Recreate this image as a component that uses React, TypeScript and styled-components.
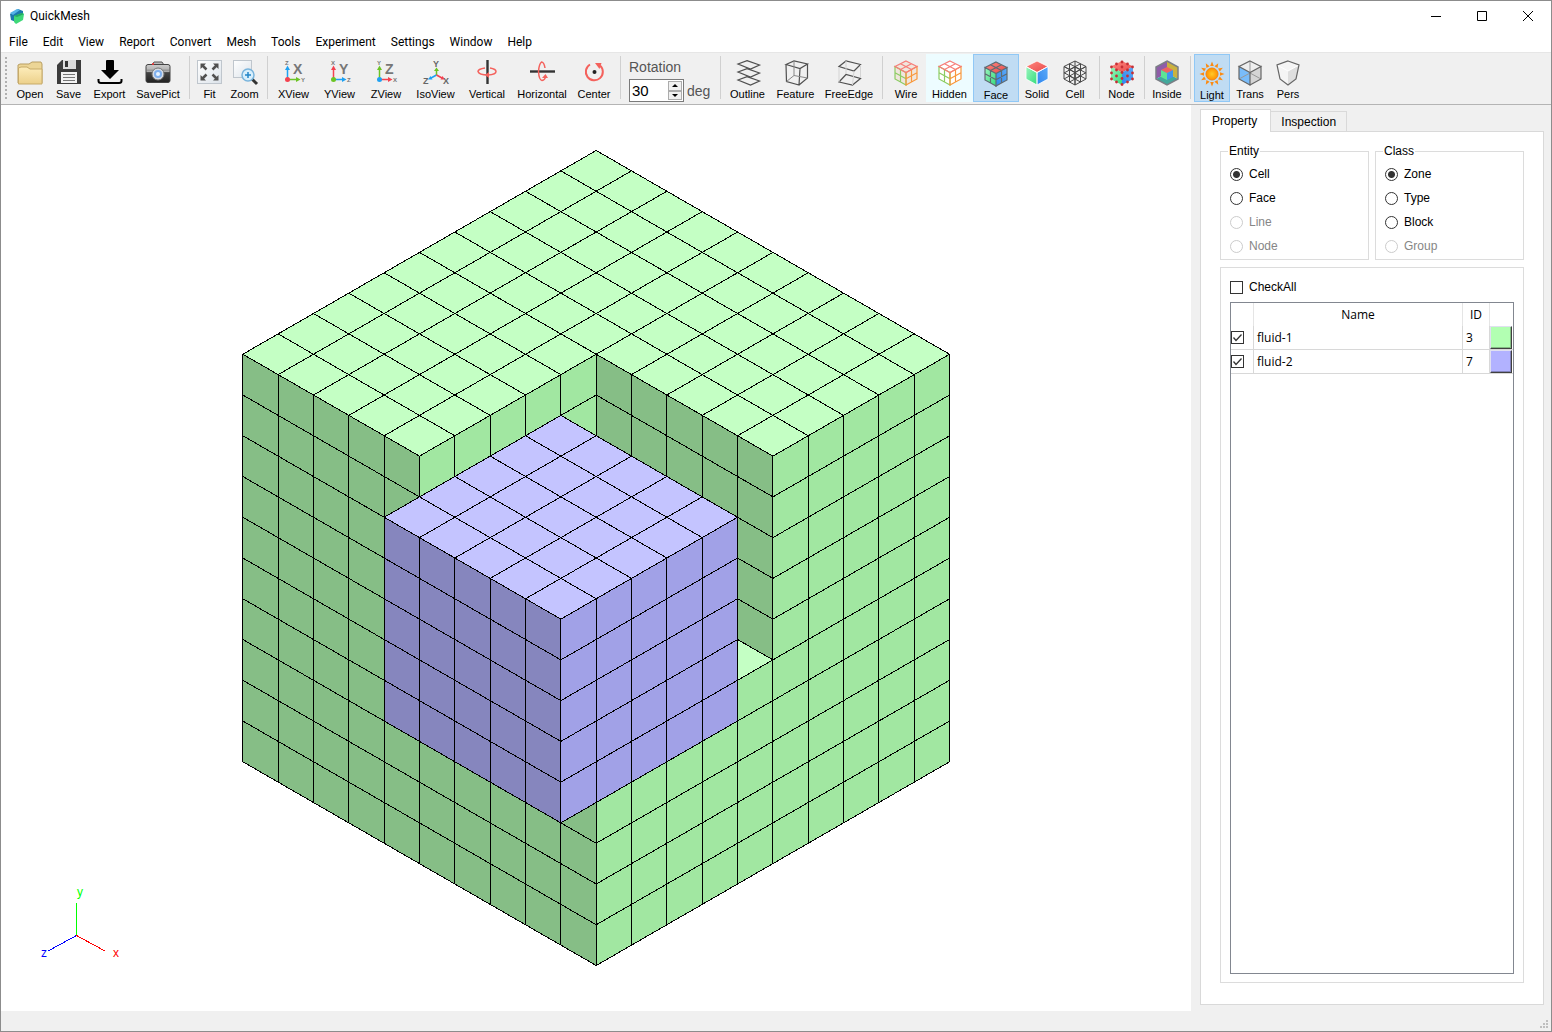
import React, { useState } from "react";
import styled, { createGlobalStyle, css } from "styled-components";

const ui = `"Liberation Sans", Arial, sans-serif`;
const system = `"Segoe UI", "Open Sans", "Noto Sans", sans-serif`;
const chrome = `"Segoe UI", Roboto, sans-serif`;

const GlobalStyle = createGlobalStyle`
  *, *::before, *::after { box-sizing: border-box; }
  body { margin: 0; background: #fff; color: #000; font: 12px/16px ${ui}; }
  button, input { font: inherit; color: inherit; margin: 0; }
`;

const Window = styled.div`
  display: flex;
  flex-direction: column;
  height: 100vh;
  min-height: 480px;
  border: 1px solid #8c8c8c;
  background: #fff;
  overflow: hidden;
`;

const TitleBar = styled.header`
  display: flex;
  align-items: center;
  height: 30px;
  flex: none;
  padding-left: 8px;
`;

const Title = styled.h1`
  flex: 1;
  margin: 0;
  padding-left: 5px;
  font: 400 12px/16px ${chrome};
`;

const CaptionButton = styled.button`
  display: grid;
  place-items: center;
  width: 46px;
  height: 28px;
  padding: 0;
  border: 0;
  background: none;
`;

const MenuBar = styled.nav`
  display: flex;
  align-items: center;
  flex: none;
  height: 21px;
`;

const MenuItem = styled.button`
  padding: 0 7px 0 8px;
  border: 0;
  background: none;
  font: 12px/20px ${chrome};
`;

const ToolBar = styled.div`
  display: flex;
  align-items: center;
  flex: none;
  height: 53px;
  padding-bottom: 2px;
  background: #f0f0f0;
  border-top: 1px solid #e6e6e6;
  border-bottom: 1px solid #b4b4b4;
`;

const Handle = styled.div`
  width: 10px;
  height: 44px;
  flex: none;
  background: radial-gradient(circle at 5px 2px, #b0b0b0 1px, transparent 1px) 0 0 / 10px 4px;
`;

const Separator = styled.div`
  flex: none;
  width: 1px;
  height: 43px;
  margin: 0 3px 0 4px;
  background: #d0d0d0;
`;

const Tool = styled.button<{ $width: number; $state?: "on" | "hover" }>`
  display: flex;
  flex-direction: column;
  align-items: center;
  flex: none;
  width: ${(p) => p.$width}px;
  height: 48px;
  padding: 5px 0 0;
  border: 1px solid transparent;
  background: none;
  font-size: 11px;
  line-height: 16px;
  white-space: nowrap;
  ${(p) => p.$state === "hover" && css`background: #edfcff;`}
  ${(p) =>
    p.$state === "on" &&
    css`
      padding-top: 6px;
      border-color: #90c8f6;
      background: #c0dcf3;
    `}
`;

const ToolIcon = styled.svg`
  flex: none;
  overflow: visible;
`;

const Rotation = styled.div`
  display: flex;
  flex-direction: column;
  flex: none;
  width: 92px;
  padding: 4px 0 0 5px;
  gap: 2px;
  color: #555;
  font-size: 14px;
  line-height: 20px;
`;

const RotationRow = styled.div`
  display: flex;
  align-items: center;
  gap: 3px;
`;

const SpinBox = styled.div`
  display: flex;
  width: 55px;
  height: 23px;
  border: 1px solid #7a7a7a;
  background: #fff;
`;

const SpinInput = styled.input`
  flex: 1;
  min-width: 0;
  padding: 0 2px;
  border: 0;
  background: none;
  color: #000;
  font-size: 15px;
  outline: none;
`;

const SpinButtons = styled.div`
  display: flex;
  flex-direction: column;
  width: 15px;
  padding: 1px 1px 1px 0;
`;

const SpinButton = styled.button`
  display: grid;
  place-items: center;
  flex: 1;
  padding: 0;
  border: 1px solid #acacac;
  background: #f0f0f0;
`;

const Work = styled.main`
  display: flex;
  flex: 1;
  min-height: 0;
  background: #f0f0f0;
`;

const Viewport = styled.section`
  position: relative;
  display: flex;
  align-items: center;
  justify-content: center;
  flex: 1;
  min-width: 0;
  background: #fff;
  overflow: hidden;
`;

const TriadSvg = styled.svg`
  position: absolute;
  left: 35px;
  bottom: 41px;
`;

const SidePanel = styled.aside`
  display: flex;
  flex-direction: column;
  flex: none;
  width: 360px;
  padding: 4px 7px 6px 9px;
`;

const Tabs = styled.div`
  display: flex;
  align-items: flex-end;
  height: 22px;
`;

const Tab = styled.button<{ $active?: boolean }>`
  height: 20px;
  padding: 0 10px;
  border: 1px solid #d9d9d9;
  border-left: 0;
  border-bottom: 0;
  background: #f0f0f0;
  ${(p) =>
    p.$active &&
    css`
      z-index: 1;
      height: 23px;
      margin-bottom: -1px;
      padding: 0 13px 1px 11px;
      border-left: 1px solid #d9d9d9;
      background: #fff;
    `}
`;

const Pane = styled.div`
  display: flex;
  flex-direction: column;
  flex: 1;
  min-height: 0;
  gap: 7px;
  padding: 11px 19px 21px;
  border: 1px solid #d9d9d9;
  background: #fff;
`;

const Groups = styled.div`
  display: grid;
  grid-template-columns: 1fr 1fr;
  gap: 6px;
`;

const Group = styled.fieldset`
  min-width: 0;
  margin: 0;
  padding: 3px 9px 1px;
  border: 1px solid #dcdcdc;
`;

const Legend = styled.legend`
  margin-left: -2px;
  padding: 0 1px;
`;

const Choice = styled.label<{ $disabled?: boolean }>`
  display: flex;
  align-items: center;
  gap: 6px;
  height: 24px;
  color: ${(p) => (p.$disabled ? "#868686" : "#000")};
`;

const Radio = styled.input`
  appearance: none;
  width: 13px;
  height: 13px;
  border: 1px solid #333;
  border-radius: 50%;
  background: #fff;
  &:checked { background: radial-gradient(circle, #333 3px, #fff 4px); }
  &:disabled { border-color: #ccc; }
`;

const Check = styled.input`
  display: block;
  appearance: none;
  width: 13px;
  height: 13px;
  border: 1px solid #333;
  background: #fff;
`;

const CheckMark = styled.span`
  display: grid;
  width: 13px;
  height: 13px;
  > * { grid-area: 1 / 1; }
  svg { pointer-events: none; }
  input:not(:checked) + svg { visibility: hidden; }
`;

const ListBox = styled.div`
  display: flex;
  flex-direction: column;
  flex: 1;
  min-height: 0;
  gap: 3px;
  padding: 7px 9px 8px;
  border: 1px solid #dcdcdc;
`;

const TableFrame = styled.div`
  flex: 1;
  min-height: 0;
  border: 1px solid #828790;
  overflow: hidden;
`;

const Table = styled.table`
  width: 100%;
  table-layout: fixed;
  border-collapse: separate;
  border-spacing: 0;
  font: 12px/16px ${system};
`;

const Head = styled.th`
  height: 23px;
  padding: 0;
  border-right: 1px solid #e5e5e5;
  font-weight: 400;
  &:last-child { border-right: 0; }
`;

const Cell = styled.td<{ $pad?: number }>`
  height: 24px;
  padding: 0 0 0 ${(p) => p.$pad ?? 0}px;
  border-right: 1px solid #d8d8d8;
  border-bottom: 1px solid #d8d8d8;
  &:last-child { border-right: 0; }
`;

const Swatch = styled.button<{ $color: string }>`
  display: block;
  width: 22px;
  height: 23px;
  padding: 0;
  border: 1px solid;
  border-color: #e0e0f0 #404040 #404040 #e0e0f0;
  box-shadow: inset -1px -1px #0004;
  background: ${(p) => p.$color};
`;

const StatusBar = styled.footer`
  display: flex;
  align-items: flex-end;
  justify-content: flex-end;
  flex: none;
  height: 20px;
  padding: 0 2px 2px 0;
  background: #f0f0f0;
`;

/* ---------- mesh drawing ---------- */

type P3 = [number, number, number];
const DX = 35.34;
const DY = 20.375;
const project = ([a, b, c]: P3) => [355.2 + (a - b) * DX, 1.5 + (a + b) * DY + c * DY * 2];
const at = (o: P3, u: P3, i: number, v: P3, j: number): P3 => [
  o[0] + u[0] * i + v[0] * j,
  o[1] + u[1] * i + v[1] * j,
  o[2] + u[2] * i + v[2] * j,
];
const A: P3 = [1, 0, 0];
const B: P3 = [0, 1, 0];
const C: P3 = [0, 0, 1];

function Grid({ o, u, v, n, m, fill }: { o: P3; u: P3; v: P3; n: number; m: number; fill: string }) {
  const pt = (i: number, j: number) => project(at(o, u, i, v, j)).join(" ");
  let d = "";
  for (let i = 0; i <= n; i++) d += `M${pt(i, 0)}L${pt(i, m)}`;
  for (let j = 0; j <= m; j++) d += `M${pt(0, j)}L${pt(n, j)}`;
  return (
    <g>
      <path d={`M${pt(0, 0)}L${pt(n, 0)}L${pt(n, m)}L${pt(0, m)}Z`} fill={fill} />
      <path d={d} stroke="#000" fill="none" />
    </g>
  );
}

const green = { top: "#c4ffc4", left: "#86be86", right: "#a1e7a1" };
const blue = { top: "#c4c4ff", left: "#8686be", right: "#a1a1e7" };

function Mesh() {
  return (
    <svg width="710" height="818" viewBox="0 0 710 818" shapeRendering="crispEdges" role="img" aria-label="Mesh">
      <Grid o={[0, 0, 0]} u={A} v={B} n={10} m={5} fill={green.top} />
      <Grid o={[0, 5, 0]} u={A} v={B} n={5} m={5} fill={green.top} />
      <Grid o={[5, 5, 5]} u={A} v={B} n={5} m={5} fill={green.top} />
      <Grid o={[5, 5, 0]} u={B} v={C} n={5} m={5} fill={green.right} />
      <Grid o={[5, 5, 0]} u={A} v={C} n={5} m={5} fill={green.left} />
      <Grid o={[0, 10, 0]} u={A} v={C} n={5} m={10} fill={green.left} />
      <Grid o={[5, 10, 5]} u={A} v={C} n={5} m={5} fill={green.left} />
      <Grid o={[10, 0, 0]} u={B} v={C} n={5} m={10} fill={green.right} />
      <Grid o={[10, 5, 5]} u={B} v={C} n={5} m={5} fill={green.right} />
      <Grid o={[5, 6, 1]} u={A} v={B} n={5} m={5} fill={blue.top} />
      <Grid o={[5, 11, 1]} u={A} v={C} n={5} m={5} fill={blue.left} />
      <Grid o={[10, 6, 1]} u={B} v={C} n={5} m={5} fill={blue.right} />
    </svg>
  );
}

function Triad() {
  return (
    <TriadSvg width="90" height="90" viewBox="0 -10 90 90" fontFamily="Liberation Sans" fontSize="12">
      <g shapeRendering="crispEdges">
        <path d="M40.5 46V13" stroke="#0f0" />
        <path d="M40.5 45.5L12 61" stroke="#00f" />
        <path d="M40.5 45.5L69 61" stroke="#f00" />
      </g>
      <text x="41" y="6" fill="#0f0">y</text>
      <text x="5" y="67" fill="#00f">z</text>
      <text x="77" y="67" fill="#f00">x</text>
    </TriadSvg>
  );
}

/* ---------- toolbar icons ---------- */

const Svg = ({ children }: { children: React.ReactNode }) => (
  <ToolIcon width="26" height="26" viewBox="0 0 26 26" fill="none" aria-hidden="true">
    {children}
  </ToolIcon>
);

const T = "M13 1L24 6.5L13 12.5L2 6.5Z";
const L = "M2 6.5L13 12.5V25L2 19Z";
const R = "M24 6.5L13 12.5V25L24 19Z";
const TG = "M7.5 3.8L18.5 9.5M18.5 3.8L7.5 9.5";
const LG = "M7.5 9.5V22M2 12.7L13 18.7";
const RG = "M18.5 9.5V22M24 12.7L13 18.7";

const Gradients = () => (
  <defs>
    <linearGradient id="cubeTop" x1="0" y1="0" x2="1" y2="1"><stop stopColor="#ff8a80" /><stop offset="1" stopColor="#e8474a" /></linearGradient>
    <linearGradient id="cubeLeft" x1="0" y1="0" x2="1" y2="1"><stop stopColor="#9bf5bd" /><stop offset="1" stopColor="#34dc7c" /></linearGradient>
    <linearGradient id="cubeRight" x1="0" y1="1" x2="1" y2="0"><stop stopColor="#2f86ee" /><stop offset="1" stopColor="#5cabf8" /></linearGradient>
    <linearGradient id="paper" x1="0" y1="0" x2="1" y2="1"><stop stopColor="#fff" /><stop offset="1" stopColor="#dce3ea" /></linearGradient>
    <linearGradient id="folder" x1="0" y1="0" x2="0" y2="1"><stop stopColor="#fdedbb" /><stop offset="1" stopColor="#ecd08a" /></linearGradient>
    <linearGradient id="body" x1="0" y1="0" x2="0" y2="1"><stop stopColor="#ccc" /><stop offset=".4" stopColor="#aaa" /><stop offset=".45" stopColor="#444" /><stop offset="1" stopColor="#222" /></linearGradient>
    <radialGradient id="sun"><stop stopColor="#ffc928" /><stop offset="1" stopColor="#ff9000" /></radialGradient>
  </defs>
);

const WireCube = ({ fill }: { fill?: string }) => (
  <Svg>
    <path d={T + L + R} fill={fill ?? "#f7a35c"} fillOpacity={fill ? 1 : 0.12} />
    <path d={L + LG} stroke="#8ccc62" strokeWidth="1.2" />
    <path d={R + RG} stroke="#f9983c" strokeWidth="1.2" />
    <path d={T + TG} stroke="#f67d78" strokeWidth="1.2" />
  </Svg>
);

const ColorCube = ({ grid, nodes }: { grid?: boolean; nodes?: boolean }) => (
  <Svg>
    <path d={T} fill="url(#cubeTop)" />
    <path d={L} fill="url(#cubeLeft)" />
    <path d={R} fill="url(#cubeRight)" />
    {grid && <path d={T + L + R + TG + LG + RG} stroke="#5f6b72" strokeWidth="1.2" />}
    {!grid && !nodes && <path d={T + L + R} stroke="#fff" strokeWidth=".8" />}
    {nodes &&
      [[13, 2], [7.5, 4], [18.5, 4], [2.5, 7], [13, 7], [23.5, 7], [7.5, 10], [18.5, 10], [13, 12.5], [2.5, 13], [23.5, 13], [7.5, 16], [18.5, 16], [13, 18.5], [2.5, 19], [23.5, 19], [7.5, 22], [18.5, 22], [13, 24.5]].map(
        ([x, y]) => <circle key={`${x}-${y}`} cx={x} cy={y} r="1.4" fill="#c62f35" />
      )}
  </Svg>
);

type AxisProps = { up: string; side: string; big: string; upColor: string; sideColor: string; dot: string };
const Axis = ({ up, side, big, upColor, sideColor, dot }: AxisProps) => (
  <Svg>
    <g fontFamily="Liberation Sans" fontWeight="bold" fill="#777">
      <text x="4" y="5" fontSize="6">{up}</text>
      <text x="20" y="22" fontSize="6">{side}</text>
      <text x="12" y="14" fontSize="14">{big}</text>
    </g>
    <path d="M6.5 19V8" stroke={upColor} strokeWidth="1.5" />
    <path d="M4 10L6.5 5.5L9 10Z" fill={upColor} />
    <path d="M6 19.5H16" stroke={sideColor} strokeWidth="1.5" />
    <path d="M15 17L19.5 19.5L15 22Z" fill={sideColor} />
    <circle cx="6.5" cy="19.5" r="2.5" fill={dot} />
  </Svg>
);

const RED = "#f4414f";
const GREEN = "#6cc424";
const AZURE = "#1ea1f2";

const icons: Record<string, React.ReactNode> = {
  Open: (
    <Svg>
      <path d="M1 23V5L3 4H12L15 2H24L25 4V23Z" fill="#ecd596" stroke="#b99f62" />
      <path d="M1.5 24V8L4 7H10L13 9H25V24Z" fill="url(#folder)" stroke="#c7aa68" />
    </Svg>
  ),
  Save: (
    <Svg>
      <path d="M1 5L6 0H25V24H1Z" fill="#3c3c3c" />
      <rect x="7" y="0" width="13" height="9" fill="#ddd" />
      <rect x="9" y="1" width="3" height="6" fill="#333" />
      <rect x="5" y="12" width="16" height="11" fill="#f3f3f3" />
      <path d="M7 14.5H19M7 17.5H19M7 20.5H19" stroke="#777" />
    </Svg>
  ),
  Export: (
    <Svg>
      <path d="M10 0H16Q17 0 17 1V10H22L13 19L4 10H9V1Q9 0 10 0Z" fill="#000" />
      <path d="M1.5 19V21Q1.5 23 4 23H22Q24.5 23 24.5 21V19" stroke="#000" strokeWidth="2" />
    </Svg>
  ),
  SavePict: (
    <Svg>
      <path d="M7 5L9 2H17L19 5Z" fill="#bbb" stroke="#555" />
      <rect x="1" y="4.5" width="24" height="18" rx="2" fill="url(#body)" stroke="#444" />
      <path d="M2 9.5H24V11H2Z" fill="#999" />
      <circle cx="13" cy="14" r="6" fill="#d6dce4" stroke="#777" />
      <circle cx="13" cy="14" r="4" fill="#7fb0ee" />
      <circle cx="13" cy="14" r="2" fill="#e6f2ff" />
      <circle cx="8" cy="4" r="1" fill="#f33" />
    </Svg>
  ),
  Fit: (
    <Svg>
      <rect x=".5" y=".5" width="24" height="23" fill="url(#paper)" stroke="#bfc6cd" />
      <path d="M5 5L9.5 9.5M20 5L15.5 9.5M5 19L9.5 14.5M20 19L15.5 14.5" stroke="#505050" strokeWidth="2.5" />
      <path d="M3.5 3.5H9L3.5 9ZM21.5 3.5H16L21.5 9ZM3.5 20.5H9L3.5 15ZM21.5 20.5H16L21.5 15Z" fill="#505050" />
    </Svg>
  ),
  Zoom: (
    <Svg>
      <rect x="1.5" y=".5" width="18" height="17" fill="url(#paper)" stroke="#bfc6cd" />
      <path d="M20 19L25 24" stroke="#333" strokeWidth="3" />
      <circle cx="16" cy="15" r="6" fill="#d8effc" stroke="#78b4dc" strokeWidth="1.5" />
      <path d="M16 12V18M13 15H19" stroke="#2386c8" strokeWidth="1.5" />
    </Svg>
  ),
  XView: <Axis up="Z" side="Y" big="X" upColor={AZURE} sideColor={GREEN} dot={RED} />,
  YView: <Axis up="X" side="Z" big="Y" upColor={RED} sideColor={AZURE} dot={GREEN} />,
  ZView: <Axis up="Y" side="X" big="Z" upColor={GREEN} sideColor={RED} dot={AZURE} />,
  IsoView: (
    <Svg>
      <path d="M13.5 15V10" stroke={GREEN} strokeWidth="1.5" />
      <path d="M11 11L13.5 7.5L16 11Z" fill={GREEN} />
      <path d="M13.5 15L8 18" stroke={AZURE} strokeWidth="1.5" />
      <path d="M5 19.5L7.5 16L9.5 19.5Z" fill={AZURE} />
      <path d="M13.5 15L19 18" stroke={RED} strokeWidth="1.5" />
      <path d="M22 19.5L19.5 16L17.5 19.5Z" fill={RED} />
      <g fontFamily="Liberation Sans" fontWeight="bold" fontSize="9" fill="#666">
        <text x="10" y="7">Y</text>
        <text x="0" y="24">Z</text>
        <text x="20" y="24">X</text>
      </g>
    </Svg>
  ),
  Vertical: (
    <Svg>
      <path d="M13.5 0V24" stroke="#333" strokeWidth="2.4" />
      <path d="M11 8Q4 9 4 11.5Q5 15 14 15Q22 14.5 22 11.5Q22 9 16 8" stroke="#f4615c" strokeWidth="1.5" />
      <path d="M15 12L11 15L15 18Z" fill="#f4615c" />
    </Svg>
  ),
  Horizontal: (
    <Svg>
      <path d="M1 11.5H26" stroke="#333" strokeWidth="2.4" />
      <path d="M16 8Q15 2 12.5 2Q10 4 9.5 11.5Q10 20 13 20.5Q16 20 16.5 17" stroke="#f4615c" strokeWidth="1.5" />
      <path d="M13 18L16.5 14L19 18Z" fill="#f4615c" />
    </Svg>
  ),
  Center: (
    <Svg>
      <path d="M9 4.5A8.5 8.5 0 1 0 19 5.5" stroke="#f4615c" strokeWidth="2" />
      <path d="M14 3L20.5 3L18.5 9Z" fill="#f4615c" />
      <circle cx="13.5" cy="12" r="2" fill="#222" />
    </Svg>
  ),
  Outline: (
    <Svg>
      {[0, 8, 16].map((y) => (
        <path key={y} d={`M12 ${y + 0.6}L24.5 ${y + 5}L15.5 ${y + 9}L3 ${y + 4}Z`} stroke="#505050" strokeWidth="1.2" />
      ))}
    </Svg>
  ),
  Feature: (
    <Svg>
      <path d="M3 4.5L11 1L24.5 4L17 8.5ZM3 4.5L3.5 21.5L16 25L17 8.5M24.5 4V18L16 25" stroke="#505050" strokeWidth="1.2" />
      <path d="M11 1V15.5L3.5 21.5M11 15.5L24.5 18" stroke="#888" />
    </Svg>
  ),
  FreeEdge: (
    <Svg>
      <path d="M3 6.5L10 1L24.5 4.5L18 11ZM3 22L10 14.5L24.5 18.5L16.5 25Z" stroke="#505050" strokeWidth="1.2" />
      <path d="M3 7V22M10 1V14M24.5 5V18M18 11L16.5 25" stroke="#d4d4d4" />
    </Svg>
  ),
  Wire: <WireCube />,
  Hidden: <WireCube fill="#fff" />,
  Face: <ColorCube grid />,
  Solid: <ColorCube />,
  Cell: (
    <Svg>
      <path d={T + L + R + TG + LG + RG + "M13 1V13M2 19L13 13L24 19M7.5 4V16L18.5 22M18.5 4V16L7.5 22M2 13L13 7L24 13V13M13 7V19"} stroke="#484848" />
    </Svg>
  ),
  Node: <ColorCube nodes />,
  Inside: (
    <Svg>
      <path d="M2 7L13 1V13L2 19Z" fill="#8f5da8" />
      <path d="M24 7L13 1V13L24 19Z" fill="#cbb23f" />
      <path d="M2 19L13 13L24 19L13 25Z" fill="#42a99c" />
      <path d="M13 1L24 7V19L13 25L2 19V7Z" stroke="#7b7f86" strokeWidth="1.5" />
      <path d="M13 7L19 10L13 13L7 10Z" fill="#ee6461" />
      <path d="M7 10L13 13V20L7 17Z" fill="#5de496" />
      <path d="M19 10L13 13V20L19 17Z" fill="#4095ef" />
    </Svg>
  ),
  Light: (
    <Svg>
      {Array.from({ length: 12 }, (_, i) => (
        <path key={i} d="M11.2 5L13 .5L14.8 5Z" fill="#fb8b12" transform={`rotate(${i * 30} 13 13)`} />
      ))}
      <circle cx="13" cy="13" r="6" fill="url(#sun)" stroke="#f58410" />
    </Svg>
  ),
  Trans: (
    <Svg>
      <path d={T} fill="#eee" />
      <path d={L} fill="#79bcfa" />
      <path d={R} fill="#d5d5d5" />
      <path d="M13 1V13L2 19M13 13L24 19" stroke="#999" />
      <path d={T + L + R} stroke="#666" strokeWidth="1.2" />
    </Svg>
  ),
  Pers: (
    <Svg>
      <path d="M13 1L24 5L21 19L13 25L5 19L2 5Z" fill="#f5f5f5" />
      <path d="M13 11L24 5L21 19L13 25Z" fill="#dedede" />
      <path d="M2 5L13 11L24 5" stroke="#fff" />
      <path d="M13 1L24 5L21 19L13 25L5 19L2 5Z" stroke="#666" strokeWidth="1.2" />
    </Svg>
  ),
};

type ToolDef = [name: string, width: number, state?: "on" | "hover"];
const viewTools: ToolDef[][] = [
  [["Open", 38], ["Save", 39], ["Export", 43], ["SavePict", 54]],
  [["Fit", 33], ["Zoom", 37]],
  [["XView", 45], ["YView", 47], ["ZView", 46], ["IsoView", 53], ["Vertical", 50], ["Horizontal", 60], ["Center", 44]],
];
const displayTools: ToolDef[][] = [
  [["Outline", 47], ["Feature", 49], ["FreeEdge", 58]],
  [["Wire", 40], ["Hidden", 47, "hover"], ["Face", 46, "on"], ["Solid", 36], ["Cell", 40]],
  [["Node", 37]],
  [["Inside", 38]],
  [["Light", 36, "on"], ["Trans", 40], ["Pers", 36]],
];

const ToolGroup = ({ tools }: { tools: ToolDef[] }) => (
  <>
    {tools.map(([name, width, state]) => (
      <Tool key={name} $width={width} $state={state} aria-pressed={state === "on"}>
        {icons[name]}
        {name}
      </Tool>
    ))}
  </>
);

function RadioGroup({ title, options, disabled }: { title: string; options: string[]; disabled: string[] }) {
  return (
    <Group>
      <Legend>{title}</Legend>
      {options.map((o, i) => (
        <Choice key={o} $disabled={disabled.includes(o)}>
          <Radio type="radio" name={title} defaultChecked={i === 0} disabled={disabled.includes(o)} />
          {o}
        </Choice>
      ))}
    </Group>
  );
}

const zones = [
  { name: "fluid-1", id: 3, color: "#b2ffb2" },
  { name: "fluid-2", id: 7, color: "#b2b2ff" },
];

export default function App() {
  const [angle, setAngle] = useState(30);
  return (
    <Window>
      <GlobalStyle />
      <TitleBar>
        <svg width="16" height="16" viewBox="0 0 16 16" aria-hidden="true">
          <Gradients />
          <path d="M1 6L9 1L14 3V9L7 14L2 12Z" fill="#1c78ad" />
          <path d="M1 5L8 1L11 2L4 7Z" fill="#55b4e8" />
          <path d="M5 8L13 5L15 6L14 12L7 16L5 14Z" fill="#3ed878" />
          <path d="M5 8L13 5L15 6L8 9Z" fill="#23a863" />
        </svg>
        <Title>QuickMesh</Title>
        <CaptionButton aria-label="Minimize">
          <svg width="11" height="11" viewBox="0 0 11 11"><path d="M0 5.5H10" stroke="#000" /></svg>
        </CaptionButton>
        <CaptionButton aria-label="Maximize">
          <svg width="11" height="11" viewBox="0 0 11 11"><path d="M.5.5H9.5V9.5H.5Z" stroke="#000" fill="none" /></svg>
        </CaptionButton>
        <CaptionButton aria-label="Close">
          <svg width="11" height="11" viewBox="0 0 11 11"><path d="M0 0L10 10M10 0L0 10" stroke="#000" /></svg>
        </CaptionButton>
      </TitleBar>
      <MenuBar>
        {["File", "Edit", "View", "Report", "Convert", "Mesh", "Tools", "Experiment", "Settings", "Window", "Help"].map((m) => (
          <MenuItem key={m}>{m}</MenuItem>
        ))}
      </MenuBar>
      <ToolBar role="toolbar">
        <Handle />
        {viewTools.map((tools, i) => (
          <React.Fragment key={i}>
            <ToolGroup tools={tools} />
            <Separator />
          </React.Fragment>
        ))}
        <Rotation>
          <label htmlFor="rotation">Rotation</label>
          <RotationRow>
            <SpinBox>
              <SpinInput id="rotation" value={angle} onChange={(e) => setAngle(Number(e.target.value) || 0)} />
              <SpinButtons>
                <SpinButton aria-label="Increase" onClick={() => setAngle(angle + 1)}>
                  <svg width="6" height="3" viewBox="0 0 6 3"><path d="M0 3L3 0L6 3Z" /></svg>
                </SpinButton>
                <SpinButton aria-label="Decrease" onClick={() => setAngle(angle - 1)}>
                  <svg width="6" height="3" viewBox="0 0 6 3"><path d="M0 0L3 3L6 0Z" /></svg>
                </SpinButton>
              </SpinButtons>
            </SpinBox>
            deg
          </RotationRow>
        </Rotation>
        {displayTools.map((tools, i) => (
          <React.Fragment key={i}>
            <Separator />
            <ToolGroup tools={tools} />
          </React.Fragment>
        ))}
      </ToolBar>
      <Work>
        <Viewport>
          <Mesh />
          <Triad />
        </Viewport>
        <SidePanel>
          <Tabs role="tablist">
            <Tab role="tab" aria-selected $active>Property</Tab>
            <Tab role="tab" aria-selected={false}>Inspection</Tab>
          </Tabs>
          <Pane>
            <Groups>
              <RadioGroup title="Entity" options={["Cell", "Face", "Line", "Node"]} disabled={["Line", "Node"]} />
              <RadioGroup title="Class" options={["Zone", "Type", "Block", "Group"]} disabled={["Group"]} />
            </Groups>
            <ListBox>
              <Choice>
                <Check type="checkbox" />
                CheckAll
              </Choice>
              <TableFrame>
                <Table>
                  <colgroup>
                    <col width="23" />
                    <col />
                    <col width="27" />
                    <col width="23" />
                  </colgroup>
                  <thead>
                    <tr>
                      <Head />
                      <Head>Name</Head>
                      <Head>ID</Head>
                      <Head />
                    </tr>
                  </thead>
                  <tbody>
                    {zones.map((z) => (
                      <tr key={z.name}>
                        <Cell>
                          <CheckMark>
                            <Check type="checkbox" defaultChecked aria-label={z.name} />
                            <svg width="13" height="13" viewBox="0 0 13 13"><path d="M2.5 6.5L5 9.5L10.5 3.5" stroke="#333" strokeWidth="1.3" fill="none" /></svg>
                          </CheckMark>
                        </Cell>
                        <Cell $pad={3}>{z.name}</Cell>
                        <Cell $pad={3}>{z.id}</Cell>
                        <Cell>
                          <Swatch $color={z.color} aria-label={`Color of ${z.name}`} />
                        </Cell>
                      </tr>
                    ))}
                  </tbody>
                </Table>
              </TableFrame>
            </ListBox>
          </Pane>
        </SidePanel>
      </Work>
      <StatusBar>
        <svg width="9" height="9" viewBox="0 0 9 9" fill="#bfbfbf" aria-hidden="true">
          <path d="M6 0h2v2h-2zM3 3h2v2h-2zM6 3h2v2h-2zM0 6h2v2h-2zM3 6h2v2h-2zM6 6h2v2h-2z" />
        </svg>
      </StatusBar>
    </Window>
  );
}
